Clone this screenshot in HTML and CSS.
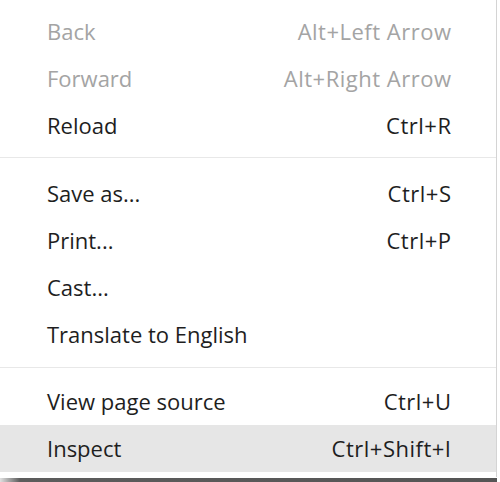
FILE: index.html
```html
<!DOCTYPE html>
<html>
<head>
<meta charset="utf-8">
<link rel="stylesheet" href="styles.css">
</head>
<body>
<div class="menu">
  <div class="item disabled"><span>Back</span><span class="key">Alt+Left Arrow</span></div>
  <div class="item disabled"><span>Forward</span><span class="key">Alt+Right Arrow</span></div>
  <div class="item"><span>Reload</span><span class="key">Ctrl+R</span></div>
  <div class="sep"></div>
  <div class="item"><span>Save as...</span><span class="key">Ctrl+S</span></div>
  <div class="item"><span>Print...</span><span class="key">Ctrl+P</span></div>
  <div class="item"><span>Cast...</span><span class="key"></span></div>
  <div class="item"><span>Translate to English</span><span class="key"></span></div>
  <div class="sep sep2"></div>
  <div class="item"><span>View page source</span><span class="key">Ctrl+U</span></div>
  <div class="item active"><span>Inspect</span><span class="key">Ctrl+Shift+I</span></div>
</div>
<div class="shadow"></div>
</body>
</html>
```
FILE: styles.css
```css
html, body {
  margin: 0;
  padding: 0;
  background: #ffffff;
}
body {
  width: 500px;
  height: 482px;
  overflow: hidden;
  font-family: "Open Sans", "Noto Sans", sans-serif;
}
.menu {
  width: 496px;
  border-right: 1px solid #d4d4d4;
  padding: 8px 0 5px 0;
  background: #ffffff;
}
.item {
  display: flex;
  justify-content: space-between;
  align-items: center;
  height: 47px;
  line-height: 47px;
  padding: 0 45px 0 47px;
  font-size: 22px;
  color: #1e1e1e;
}
.key {
  letter-spacing: 0.5px;
  margin-right: -0.5px;
}
.item.disabled {
  color: #a4a4a4;
}
.item.active {
  background: #e6e6e6;
}
.sep {
  height: 1px;
  background: #e8e8e8;
  margin: 8px 0 12px 0;
}
.sep2 {
  margin: 9px 0 10px 0;
}
.shadow {
  height: 5px;
  width: 497px;
  margin-top: 1px;
  background: linear-gradient(to right, #e0e0e0 0px, #5c5c5c 20px, #555555 100%);
}
```
